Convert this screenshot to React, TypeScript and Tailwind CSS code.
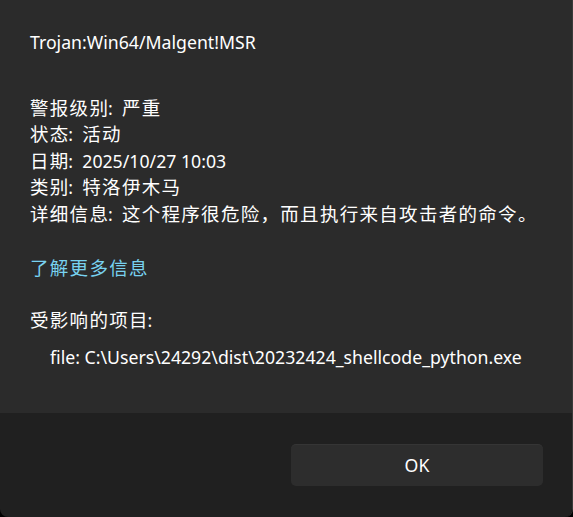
import React from 'react';

const font = "font-['Noto_Sans','Noto_Sans_CJK_SC',sans-serif]";

const details: [string, string][] = [
  ['警报级别', '严重'],
  ['状态', '活动'],
  ['日期', '2025/10/27 10:03'],
  ['类别', '特洛伊木马'],
  ['详细信息', '这个程序很危险，而且执行来自攻击者的命令。'],
];

const cjk = /([\u3000-\u9fff\uff00-\uffef]+)/;

// CJK runs get a touch more width, like the YaHei glyphs in the dialog
const T: React.FC<{ s: string }> = ({ s }) => (
  <>
    {s.split(cjk).map((part, i) =>
      cjk.test(part) ? (
        <span key={i} className="text-[18.5px]">
          <span className="tracking-[1.3px]">{part.slice(0, -1)}</span>
          {part.slice(-1)}
        </span>
      ) : (
        <span key={i} className="whitespace-pre">{part.replace(': ', ':  ')}</span>
      )
    )}
  </>
);

const App: React.FC = () => {
  return (
    <div className={`w-[573px] h-[517px] bg-black ${font} text-[17.7px] text-white`}>
      <div className="w-full h-full flex flex-col rounded-b-[8px] overflow-hidden border-r border-[#3a3a3a]">
        <div className="h-[413px] bg-[#2b2b2b] pl-[30px] pt-[29px] leading-[26.6px]">
          <div>Trojan:Win64/Malgent!MSR</div>
          <div className="mt-[39px]">
            {details.map(([k, v]) => (
              <div key={k} className="h-[26.6px]">
                <T s={`${k}: ${v}`} />
              </div>
            ))}
          </div>
          <div className="mt-[27px] h-[26.6px] text-[#78d2f0]">
            <T s="了解更多信息" />
          </div>
          <div className="mt-[26px] h-[26.6px]">
            <T s="受影响的项目:" />
          </div>
          <div className="mt-[10px] pl-[20px]">file: C:\Users\24292\dist\20232424_shellcode_python.exe</div>
        </div>
        <div className="flex-1 bg-[#202020] flex justify-end items-start pt-[31px] pr-[29px]">
          <button className="w-[252px] h-[42px] rounded-[5px] bg-[#2d2d2d] border-t border-[#353535] text-white text-[17.7px]">
            OK
          </button>
        </div>
      </div>
    </div>
  );
};

export default App;
